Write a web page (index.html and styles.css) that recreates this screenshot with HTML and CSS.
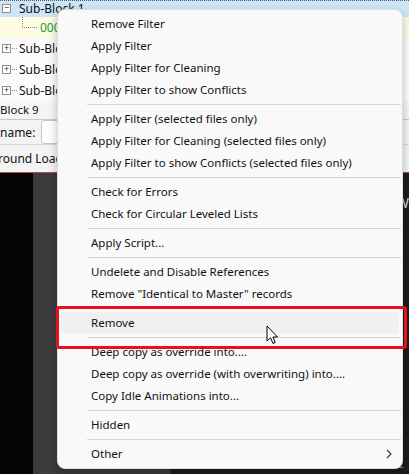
FILE: index.html
```html
<!DOCTYPE html>
<html lang="en">
<head>
    <meta charset="UTF-8">
    <title>Context Menu</title>
    <link rel="stylesheet" href="styles.css">
</head>
<body>
    <div class="app">
        <div class="tree">
            <div class="row selected">
                <span class="box">&minus;</span>
                <span class="label">Sub-Block 1</span>
            </div>
            <div class="row leaf">
                <span class="dots"></span>
                <span class="record">00012345</span>
            </div>
            <div class="row">
                <span class="box">+</span>
                <span class="dash"></span>
                <span class="label">Sub-Block 2</span>
            </div>
            <div class="row">
                <span class="box">+</span>
                <span class="dash"></span>
                <span class="label">Sub-Block 3</span>
            </div>
            <div class="row">
                <span class="box">+</span>
                <span class="dash"></span>
                <span class="label">Sub-Block 4</span>
            </div>
            <div class="row block">Block 9</div>
        </div>
        <div class="field">
            <label>name:</label>
            <div class="input"></div>
        </div>
        <div class="tabline">round Load</div>
        <div class="dark">
            <div class="black"></div>
            <div class="gutter"></div>
            <div class="text">
                <p>W</p>
                <p class="green">L</p>
                <p>L</p>
                <p>I</p>
                <p class="green">L</p>
                <p class="last">mental health and the health of your</p>
            </div>
        </div>

        <div class="menu">
            <div class="item">Remove Filter</div>
            <div class="item">Apply Filter</div>
            <div class="item">Apply Filter for Cleaning</div>
            <div class="item">Apply Filter to show Conflicts</div>
            <div class="sep"></div>
            <div class="item">Apply Filter (selected files only)</div>
            <div class="item">Apply Filter for Cleaning (selected files only)</div>
            <div class="item">Apply Filter to show Conflicts (selected files only)</div>
            <div class="sep"></div>
            <div class="item">Check for Errors</div>
            <div class="item">Check for Circular Leveled Lists</div>
            <div class="sep"></div>
            <div class="item">Apply Script...</div>
            <div class="sep"></div>
            <div class="item">Undelete and Disable References</div>
            <div class="item">Remove "Identical to Master" records</div>
            <div class="sep"></div>
            <div class="item hover">Remove</div>
            <div class="sep"></div>
            <div class="item">Deep copy as override into....</div>
            <div class="item">Deep copy as override (with overwriting) into....</div>
            <div class="item">Copy Idle Animations into...</div>
            <div class="sep"></div>
            <div class="item">Hidden</div>
            <div class="sep"></div>
            <div class="item sub">Other
                <svg class="chev" width="6" height="10" viewBox="0 0 6 10">
                    <polyline points="1,1 5,5 1,9" fill="none" stroke="#333" stroke-width="1.1"/>
                </svg>
            </div>
        </div>

        <div class="mark"></div>

        <svg class="cursor" width="13" height="20" viewBox="0 0 13 20">
            <path d="M1 1 L1 16 L4.5 12.8 L7 18.5 L9.3 17.5 L6.9 12 L11.5 12 Z" fill="#fff" stroke="#000" stroke-width="1" stroke-linejoin="round"/>
        </svg>
    </div>
</body>
</html>
```

FILE: styles.css
```css
* {
    box-sizing: border-box;
}

body {
    margin: 0;
    font-family: "Noto Sans", "Open Sans", sans-serif;
    font-size: 11.5px;
    color: #111;
    background-color: #0b0b0b;
}

.app {
    position: relative;
    width: 409px;
    height: 474px;
    overflow: hidden;
    display: flex;
    flex-direction: column;
}

/* tree view behind the menu */

.tree {
    background-color: #fbfbfb;
}

.row {
    height: 21px;
    display: flex;
    align-items: center;
    white-space: nowrap;
}

.row.selected {
    height: 17px;
    background-color: #cde6f7;
    border-top: 1px dotted #555;
    padding-bottom: 1px;
}

.row.leaf {
    height: 21px;
    background-color: #fdfbe3;
}

.row.block {
    height: 19px;
    padding-bottom: 2px;
    border-bottom: 1px solid #c8c8c8;
    background-color: #f5f5f5;
}

.box {
    width: 9px;
    height: 9px;
    margin-left: 2px;
    border: 1px solid #8e8e8e;
    background-color: #fff;
    font-size: 9px;
    line-height: 6px;
    text-align: center;
    color: #333;
}

.dash {
    width: 5px;
    border-top: 1px dotted #888;
    margin-left: 1px;
}

.label {
    margin-left: 2px;
    font-size: 12px;
}

.row.selected .label {
    margin-left: 8px;
}

.dots {
    width: 15px;
    height: 11px;
    margin-left: 22px;
    margin-top: -10px;
    border-left: 1px dotted #888;
    border-bottom: 1px dotted #888;
}

.record {
    margin-left: 3px;
    color: #1d9a3a;
    font-size: 12px;
}

.field {
    height: 32px;
    display: flex;
    align-items: center;
    gap: 6px;
    font-size: 12px;
    background-color: #f3f3f3;
    border-bottom: 1px solid #d4d4d4;
}

.input {
    width: 300px;
    height: 24px;
    background-color: #fff;
    border: 1px solid #c6c6c6;
    border-radius: 3px;
}

.tabline {
    height: 29px;
    line-height: 27px;
    margin-left: -2px;
    font-size: 12px;
    background-color: #f3f3f3;
    border-bottom: 1px solid #b54a4a;
    white-space: nowrap;
}

.dark {
    flex: 1;
    display: flex;
}

.black {
    width: 35px;
    background-color: #050505;
}

.gutter {
    width: 145px;
    background-color: #3b3b3b;
}

.text {
    flex: 1;
    position: relative;
    background-color: #1c1c1c;
    color: #dcdcdc;
    font-size: 14px;
    padding: 20px 0 0 225px;
    white-space: nowrap;
}

.text p {
    margin: 0 0 46px;
}

.text .green {
    color: #6cb25c;
}

.text .last {
    position: absolute;
    left: 6px;
    bottom: -10px;
    margin: 0;
    color: #e6e6e6;
}

/* context menu */

.menu {
    position: absolute;
    left: 57px;
    top: 9px;
    width: 346px;
    padding: 3px 0 3px;
    background-color: #f9f9f9;
    border: 1px solid #dedede;
    border-radius: 8px;
    box-shadow: 0 4px 10px rgba(0, 0, 0, 0.25);
}

.item {
    height: 22px;
    line-height: 22px;
    padding-left: 30px;
    margin: 0 3px;
    border-radius: 4px;
    white-space: nowrap;
    position: relative;
}

.item.hover {
    background-color: #f0f0f0;
}

.chev {
    position: absolute;
    right: 7px;
    top: 6px;
}

.sep {
    height: 7px;
    margin-left: 29px;
    margin-right: 1px;
    display: flex;
    align-items: center;
}

.sep::after {
    content: "";
    flex: 1;
    border-top: 1px solid #d6d6d6;
}

.mark {
    position: absolute;
    left: 56px;
    top: 306px;
    width: 351px;
    height: 43px;
    border: 3.5px solid #e8101c;
    border-radius: 3px;
}

.cursor {
    position: absolute;
    left: 266px;
    top: 325px;
}
```
